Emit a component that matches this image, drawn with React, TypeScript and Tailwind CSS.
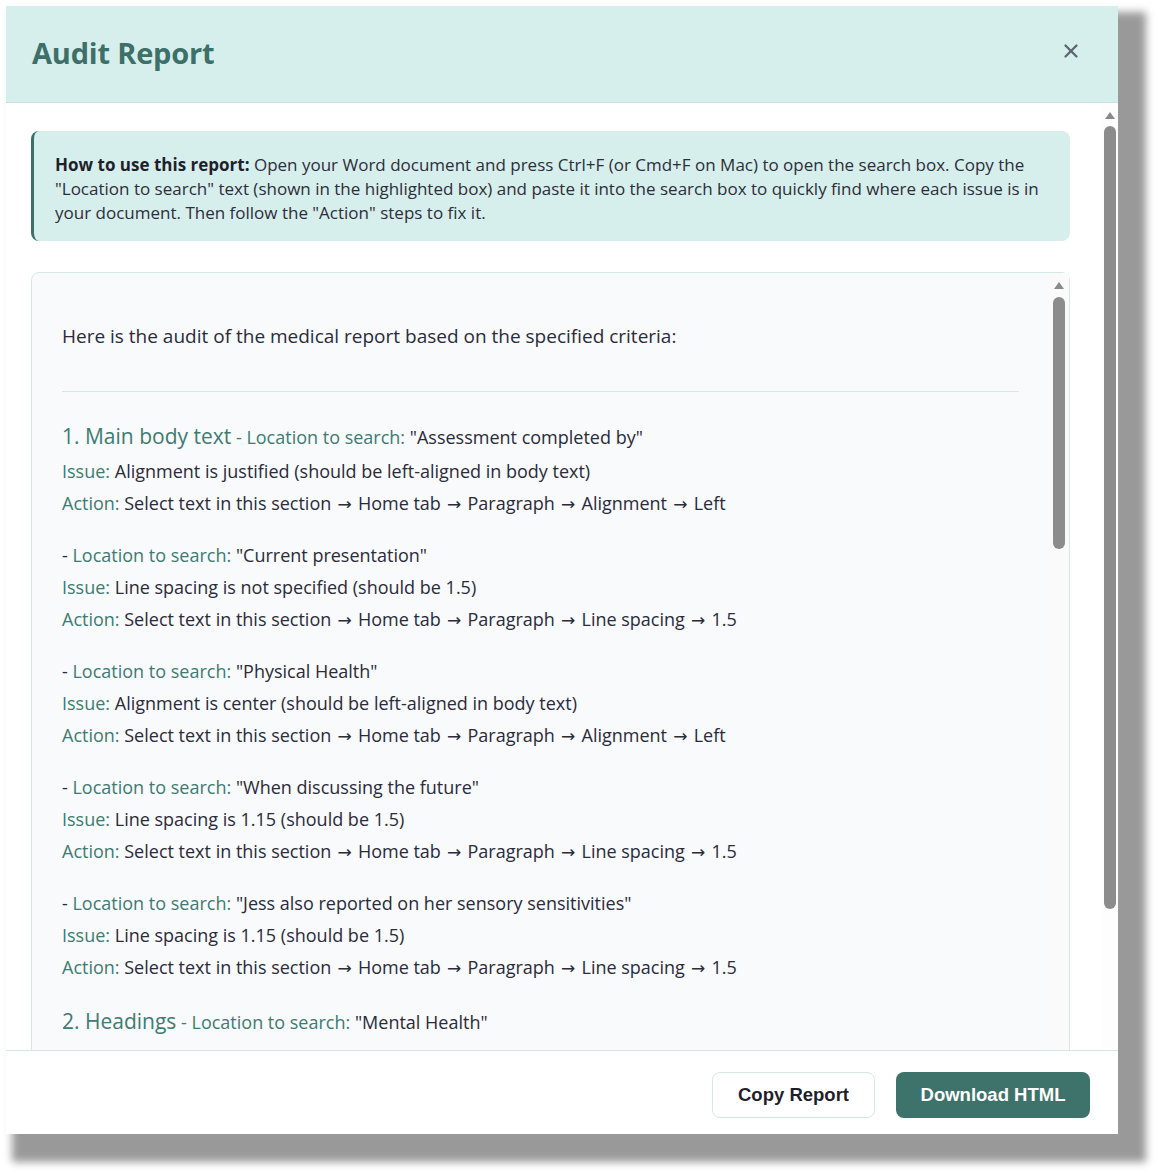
import { Fragment } from "react";
import { X } from "lucide-react";

type Entry = {
  heading?: string;
  location: string;
  issue: string;
  action: string;
};

const entries: Entry[] = [
  {
    heading: "1. Main body text",
    location: '"Assessment completed by"',
    issue: "Alignment is justified (should be left-aligned in body text)",
    action: "Select text in this section → Home tab → Paragraph → Alignment → Left",
  },
  {
    location: '"Current presentation"',
    issue: "Line spacing is not specified (should be 1.5)",
    action: "Select text in this section → Home tab → Paragraph → Line spacing → 1.5",
  },
  {
    location: '"Physical Health"',
    issue: "Alignment is center (should be left-aligned in body text)",
    action: "Select text in this section → Home tab → Paragraph → Alignment → Left",
  },
  {
    location: '"When discussing the future"',
    issue: "Line spacing is 1.15 (should be 1.5)",
    action: "Select text in this section → Home tab → Paragraph → Line spacing → 1.5",
  },
  {
    location: '"Jess also reported on her sensory sensitivities"',
    issue: "Line spacing is 1.15 (should be 1.5)",
    action: "Select text in this section → Home tab → Paragraph → Line spacing → 1.5",
  },
];

// Open Sans draws a tiny arrow, so the arrows use DejaVu Sans
function Steps({ text }: { text: string }) {
  const parts = text.split(" → ");
  return (
    <>
      {parts.map((p, i) => (
        <Fragment key={i}>
          {i > 0 && (
            <>
              {" "}
              <span className="font-['DejaVu_Sans',sans-serif] text-[17px] leading-none mx-[1.5px]">→</span>{" "}
            </>
          )}
          {p}
        </Fragment>
      ))}
    </>
  );
}

function ScrollBar({ thumbTop, thumbHeight, className }: { thumbTop: number; thumbHeight: number; className: string }) {
  return (
    <div className={className}>
      <div className="flex justify-center">
        <div className="h-0 w-0 border-x-[5px] border-b-[7px] border-x-transparent border-b-[#8a8a8a]" />
      </div>
      <div className="flex-1 flex justify-center" style={{ paddingTop: thumbTop }}>
        <div className="w-[12px] rounded-full bg-[#8c8c8c]" style={{ height: thumbHeight }} />
      </div>
    </div>
  );
}

export default function App() {
  return (
    <div className="min-h-screen bg-white p-[6px] font-['Open_Sans','Liberation_Sans',sans-serif]">
      <div className="w-[1112px] h-[1128px] bg-white flex flex-col shadow-[17px_17px_8px_11px_rgba(0,0,0,0.4)]">
        {/* Header */}
        <div className="h-[97px] shrink-0 bg-[#d7efec] border-b border-[#c8e2de] flex items-center justify-between pl-[26px] pr-[36px]">
          <h2 className="-mt-[3px] text-[29px] font-bold text-[#3d7068] tracking-[-0.2px]">Audit Report</h2>
          <X className="w-[22px] h-[22px] -mt-[6px] text-[#5b6670]" strokeWidth={2.5} />
        </div>

        {/* Body */}
        <div className="h-[947px] shrink-0 flex overflow-hidden">
          <div className="flex-1 pl-[25px] pr-[32px] pt-[28px] overflow-hidden">
            {/* Info box */}
            <div className="h-[110px] rounded-lg bg-[#d7efec] border-l-[3px] border-[#3d7068] pl-[21px] pt-[22px] text-[17px] leading-[24px] text-[#2d2d3a] whitespace-nowrap">
              <span className="font-bold text-[#1f1f2b]">How to use this report:</span> Open your Word document and press Ctrl+F (or Cmd+F on Mac) to open the search box. Copy the
              <br />
              "Location to search" text (shown in the highlighted box) and paste it into the search box to quickly find where each issue is in
              <br />
              your document. Then follow the "Action" steps to fix it.
            </div>

            {/* Report */}
            <div className="mt-[31px] h-[900px] rounded-lg border border-[#d5e8e6] bg-[#f8fafb] flex">
              <div className="flex-1 pl-[30px] pr-[30px] pt-[47px] text-[18px] text-[#2b2b3a] whitespace-nowrap">
                <p className="leading-[32px] text-[19px]">Here is the audit of the medical report based on the specified criteria:</p>
                <hr className="mt-[39px] border-t border-[#d5e8e6]" />
                <div className="mt-[26px]">
                  {entries.map((e, i) => (
                    <div key={i} className="mb-[20px]">
                      {e.heading ? (
                        <div className="leading-[36px]">
                          <span className="text-[21px] font-medium text-[#3e7b72]">{e.heading}</span>
                          <span className="text-[#3e7b72]"> - Location to search:</span> {e.location}
                        </div>
                      ) : (
                        <div className="leading-[32px]">
                          - <span className="text-[#3e7b72]">Location to search:</span> {e.location}
                        </div>
                      )}
                      <div className="leading-[32px]">
                        <span className="text-[#3e7b72]">Issue:</span> {e.issue}
                      </div>
                      <div className="h-[32px] leading-[32px]">
                        <span className="text-[#3e7b72]">Action:</span> <Steps text={e.action} />
                      </div>
                    </div>
                  ))}
                  <div className="leading-[36px]">
                    <span className="text-[21px] font-medium text-[#3e7b72]">2. Headings</span>
                    <span className="text-[#3e7b72]"> - Location to search:</span> "Mental Health"
                  </div>
                </div>
              </div>
              <ScrollBar
                className="w-[20px] bg-[#fafafa] pt-[9px] flex flex-col"
                thumbTop={8}
                thumbHeight={252}
              />
            </div>
          </div>
          <ScrollBar
            className="w-[16px] bg-[#fdfdfd] pt-[9px] flex flex-col"
            thumbTop={7}
            thumbHeight={783}
          />
        </div>

        {/* Footer */}
        <div className="flex-1 border-t border-[#d5e8e6] flex items-center justify-end gap-[21px] pr-[28px] pt-[4px] font-['Liberation_Sans',Arial,sans-serif]">
          <button className="w-[163px] h-[46px] rounded-lg border border-[#d5e8e6] bg-white text-[18.5px] font-bold text-[#1f1f2b]">
            Copy Report
          </button>
          <button className="w-[194px] h-[46px] rounded-lg bg-[#3d736b] text-[18.5px] font-bold text-white">
            Download HTML
          </button>
        </div>
      </div>
    </div>
  );
}
